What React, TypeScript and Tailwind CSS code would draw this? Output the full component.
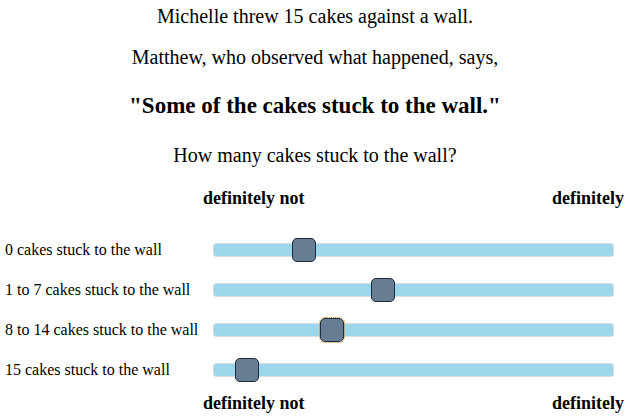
import React from "react";

const rows = [
  { label: "0 cakes stuck to the wall", pos: 91, focus: false },
  { label: "1 to 7 cakes stuck to the wall", pos: 170, focus: false },
  { label: "8 to 14 cakes stuck to the wall", pos: 119, focus: true },
  { label: "15 cakes stuck to the wall", pos: 34, focus: false },
];

function Labels() {
  return (
    <div className="flex">
      <div className="w-[203px] shrink-0" />
      <div className="w-[421px] flex justify-between font-bold text-[18px]">
        <span>definitely not</span>
        <span>definitely</span>
      </div>
    </div>
  );
}

export default function App() {
  return (
    <div className="w-[630px] h-[418px] bg-white text-black font-['Liberation_Serif',serif] overflow-hidden">
      <div className="h-[32px] flex items-center justify-center text-[20px]">
        Michelle threw 15 cakes against a wall.
      </div>
      <div className="h-[50px] flex items-center justify-center text-[20px]">
        Matthew, who observed what happened, says,
      </div>
      <div className="h-[48px] flex items-center justify-center text-[23px] font-bold">
        "Some of the cakes stuck to the wall."
      </div>
      <div className="h-[50px] flex items-center justify-center text-[20px]">
        How many cakes stuck to the wall?
      </div>
      <div className="h-[36px] flex items-center">
        <div className="w-full">
          <Labels />
        </div>
      </div>
      <div className="h-[14px]" />
      {rows.map((r) => (
        <div key={r.label} className="h-[40px] flex items-center">
          <div className="w-[213px] shrink-0 pl-[5px] text-[16px]">{r.label}</div>
          <div className="relative w-[401px] h-[14px] rounded-[3px] bg-[#9dd5ea] border border-[#d6dfe3]">
            <div
              className={
                "absolute top-1/2 -translate-y-1/2 w-[24px] h-[24px] rounded-[5px] bg-[#687d94] border border-[#1b2c3a]" +
                (r.focus ? " outline-1 outline-dotted outline-[#d08a1c]" : "")
              }
              style={{ left: r.pos - 12 - 1 }}
            />
          </div>
        </div>
      ))}
      <div className="h-[26px] flex items-center">
        <div className="w-full">
          <Labels />
        </div>
      </div>
    </div>
  );
}
